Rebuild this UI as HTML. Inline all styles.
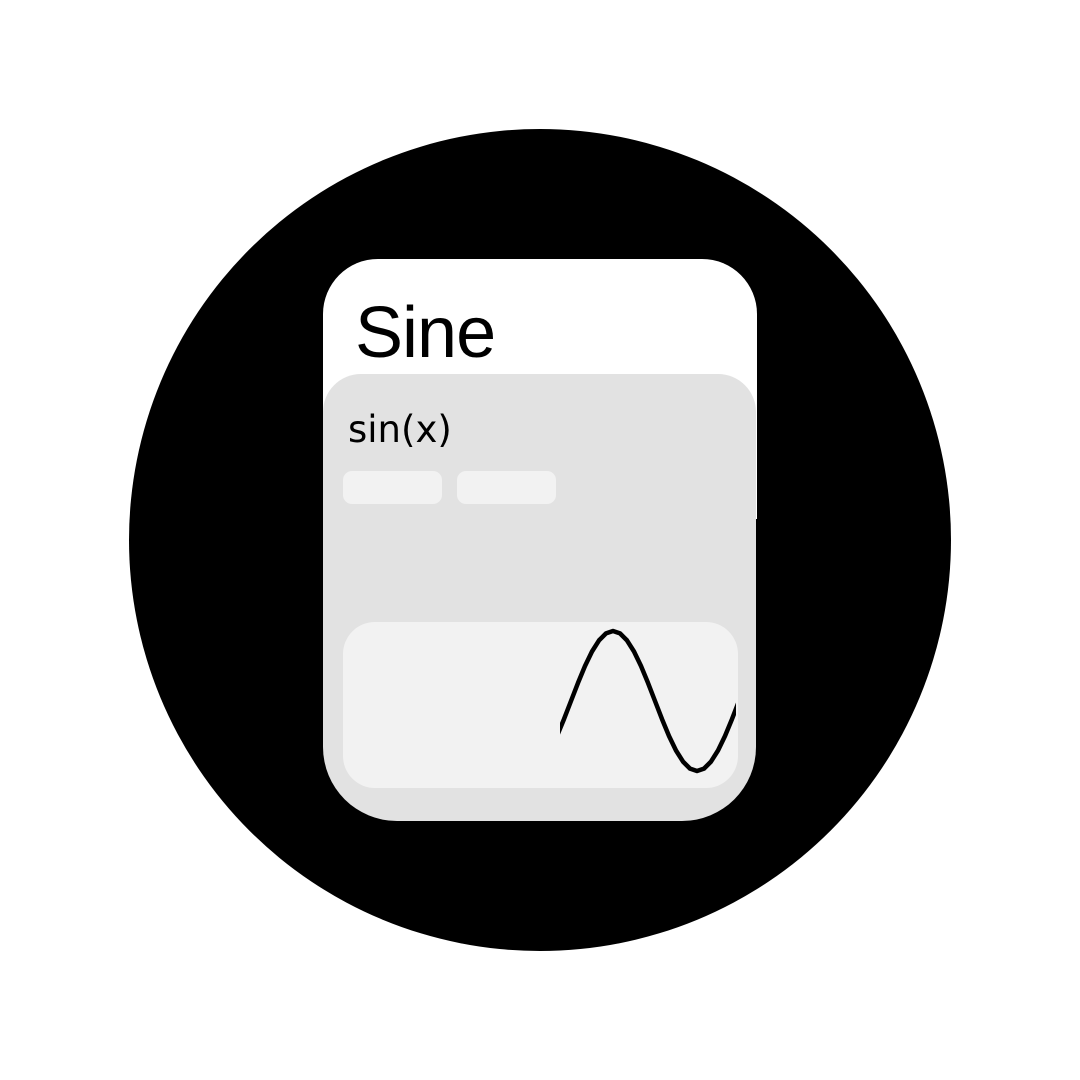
<!DOCTYPE html>
<html><head><meta charset="utf-8"><style>
html,body{margin:0;padding:0;background:#fff;}
body{width:1080px;height:1080px;position:relative;overflow:hidden;}
.circle{position:absolute;left:129px;top:129px;width:822px;height:822px;border-radius:50%;background:#000;}
.white{position:absolute;left:323px;top:259px;width:434px;height:260px;background:#fff;border-radius:55px 55px 0 0;}
.gray{position:absolute;left:323px;top:374px;width:433px;height:447px;background:#e2e2e2;border-radius:38px 38px 74px 74px;}
.title{position:absolute;left:355px;top:288px;font:72px "Liberation Sans",sans-serif;letter-spacing:-1px;color:#000;line-height:90px;}
.sub{position:absolute;left:348px;top:406px;font:37px "DejaVu Sans",sans-serif;color:#000;line-height:48px;}
.btn{position:absolute;top:471px;width:99px;height:33px;background:#f2f2f2;border-radius:9px;}
.panel{position:absolute;left:343px;top:622px;width:395px;height:166px;background:#f2f2f2;border-radius:32px;}
svg{position:absolute;left:0;top:0;}
</style></head><body>
<div class="circle"></div>
<div class="white"></div>
<div class="gray"></div>
<div class="title">Sine</div>
<div class="sub">sin(x)</div>
<div class="btn" style="left:343px"></div>
<div class="btn" style="left:457px"></div>
<div class="panel"></div>
<svg width="1080" height="1080">
<defs><clipPath id="c"><rect x="560" y="600" width="176" height="200"/></clipPath></defs>
<polyline clip-path="url(#c)" points="550,750.5 557,736 564,719.1 571,701 578,682.9 585,666 592,651.5 599,640.4 606,633.4 613,631 620,633.4 627,640.4 634,651.5 641,666 648,682.9 655,701 662,719.1 669,736 676,750.5 683,761.6 690,768.6 697,771 704,768.6 711,761.6 718,750.5 725,736 732,719.1 739,701 746,682.9" fill="none" stroke="#000" stroke-width="4.5" stroke-linejoin="round"/>
</svg>
</body></html>
